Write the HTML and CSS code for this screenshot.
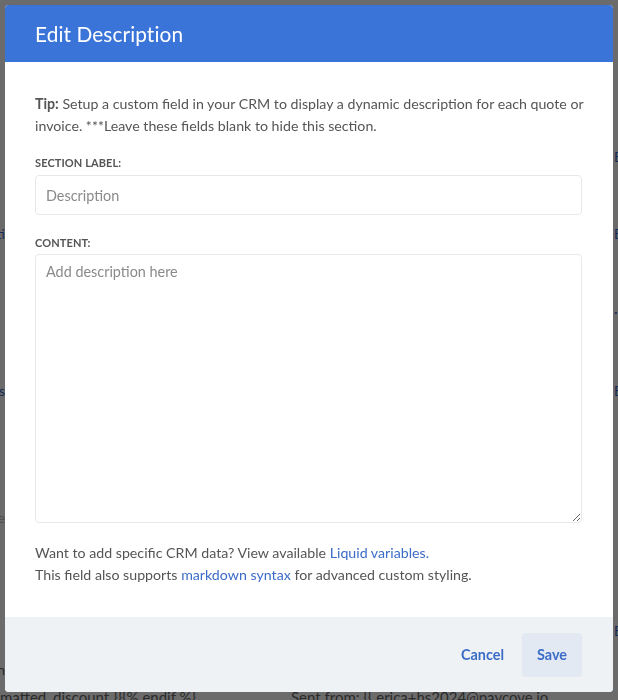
FILE: index.html
```html
<!DOCTYPE html>
<html lang="en">
<head>
<meta charset="utf-8">
<title>Edit Description</title>
<link rel="stylesheet" href="styles.css">
</head>
<body>
  <!-- page underneath the dialog -->
  <div class="page">
    <div class="bg-row row-1"><span class="bg-left"></span><span class="bg-right link">Edit</span></div>
    <div class="bg-row row-2"><span class="bg-left link">Descripti</span><span class="bg-right link">Edit</span></div>
    <div class="bg-row row-3"><span class="bg-left"></span><span class="bg-right link">·</span></div>
    <div class="bg-row row-4"><span class="bg-left link">Terms</span><span class="bg-right link">Edit</span></div>
    <div class="bg-row row-5"><span class="bg-left faint">e</span><span class="bg-right"></span></div>
    <div class="bg-row row-6"><span class="bg-left"></span><span class="bg-right link">Edit</span></div>
    <div class="bg-row row-7"><span class="bg-left">In</span><span class="bg-right"></span></div>
    <div class="bg-code">
      <span class="code-a">matted_discount }}{% endif %}</span>
      <span class="code-b">Sent from: {{ erica+hs2024@paycove.io</span>
    </div>
  </div>

  <div class="overlay">
    <div class="modal" role="dialog" aria-labelledby="modal-title">
      <header class="modal-header">
        <h2 id="modal-title" class="modal-title">Edit Description</h2>
      </header>

      <div class="modal-body">
        <p class="tip"><strong>Tip:</strong> Setup a custom field in your CRM to display a dynamic description for each quote or<br>invoice. ***Leave these fields blank to hide this section.</p>

        <label class="field-label" for="section-label">Section Label:</label>
        <input id="section-label" class="field-input" type="text" placeholder="Description">

        <label class="field-label field-label-content" for="content">Content:</label>
        <textarea id="content" class="field-textarea" placeholder="Add description here"></textarea>

        <p class="help">Want to add specific CRM data? View available <a href="#" class="link-text">Liquid variables.</a><br>This field also supports <a href="#" class="link-text">markdown syntax</a> for advanced custom styling.</p>
      </div>

      <footer class="modal-footer">
        <button type="button" class="btn btn-cancel">Cancel</button>
        <button type="button" class="btn btn-save">Save</button>
      </footer>
    </div>
  </div>
</body>
</html>
```

FILE: styles.css
```css
* { box-sizing: border-box; }

html, body {
  margin: 0;
  height: 100%;
}

body {
  background: #ffffff;
  font-family: "Lato", "Open Sans", "Liberation Sans", sans-serif;
  color: #555555;
  overflow: hidden;
}

/* ---- page underneath ---- */
.page {
  height: 700px;
  display: flex;
  flex-direction: column;
  font-size: 14px;
  color: #666666;
}

.bg-row {
  display: flex;
  justify-content: space-between;
  height: 16px;
  line-height: 16px;
}

.row-1 { margin-top: 149px; }
.row-2 { margin-top: 61px; }
.row-3 { margin-top: 62px; }
.row-4 { margin-top: 63px; }
.row-5 { margin-top: 111px; }
.row-6 { margin-top: 97px; }
.row-7 { margin-top: 23px; }

.bg-left {
  width: 5px;
  overflow: hidden;
  display: flex;
  justify-content: flex-end;
  white-space: nowrap;
}

.bg-right {
  width: 4px;
  overflow: hidden;
  white-space: nowrap;
}

.link { color: #3b68c8; }
.faint { color: #bbbbbb; }

.bg-code {
  margin-top: auto;
  height: 14px;
  display: flex;
  white-space: nowrap;
  line-height: 22px;
  font-size: 15px;
  color: #666666;
}

.code-a { width: 291px; }

/* ---- dialog ---- */
.overlay {
  position: fixed;
  inset: 0;
  background: rgba(0, 0, 0, 0.58);
  padding: 5px;
}

.modal {
  width: 608px;
  height: 687px;
  background: #ffffff;
  border-radius: 4px;
  display: flex;
  flex-direction: column;
  overflow: hidden;
}

.modal-header {
  height: 57px;
  flex: none;
  background: #3a74d9;
  display: flex;
  align-items: center;
  padding: 0 30px;
}

.modal-title {
  margin: 0;
  font-size: 20.8px;
  font-weight: 400;
  color: #ffffff;
  letter-spacing: 0.1px;
}

.modal-body {
  flex: 1;
  display: flex;
  flex-direction: column;
  padding: 31px 31px 0 30px;
}

.tip,
.help {
  margin: 0;
  font-size: 14.2px;
  line-height: 22px;
  color: #555555;
  white-space: nowrap;
}

.tip strong { font-weight: 700; }

.field-label {
  display: block;
  margin-top: 20px;
  margin-bottom: 6px;
  font-size: 11px;
  line-height: 12px;
  font-weight: 700;
  text-transform: uppercase;
  color: #555555;
  letter-spacing: 0.1px;
}

.field-label-content {
  margin-top: 22px;
  margin-bottom: 5px;
}

.field-input,
.field-textarea {
  width: 100%;
  border: 1px solid #e8e8e8;
  border-radius: 4px;
  font-family: inherit;
  font-size: 14.4px;
  color: #555555;
  background: #ffffff;
  outline: none;
}

.field-input {
  height: 40px;
  padding: 0 10px;
}

.field-textarea {
  height: 269px;
  padding: 8px 10px;
  line-height: 18px;
  resize: vertical;
  display: block;
}

.field-input::placeholder,
.field-textarea::placeholder {
  color: #8a8a8a;
  opacity: 1;
}

.help { margin-top: 19px; }

.link-text {
  color: #3b6cc7;
  text-decoration: none;
}

/* ---- footer ---- */
.modal-footer {
  height: 75px;
  flex: none;
  background: #eff2f5;
  display: flex;
  align-items: center;
  justify-content: flex-end;
  gap: 18px;
  padding: 0 31px 0 0;
}

.btn {
  border: 0;
  font-family: inherit;
  font-size: 14.4px;
  font-weight: 700;
  color: #3b6cc7;
  cursor: pointer;
}

.btn-cancel {
  background: transparent;
  padding: 0;
}

.btn-save {
  width: 60px;
  height: 44px;
  border-radius: 4px;
  background: #e3e9f3;
}
```
